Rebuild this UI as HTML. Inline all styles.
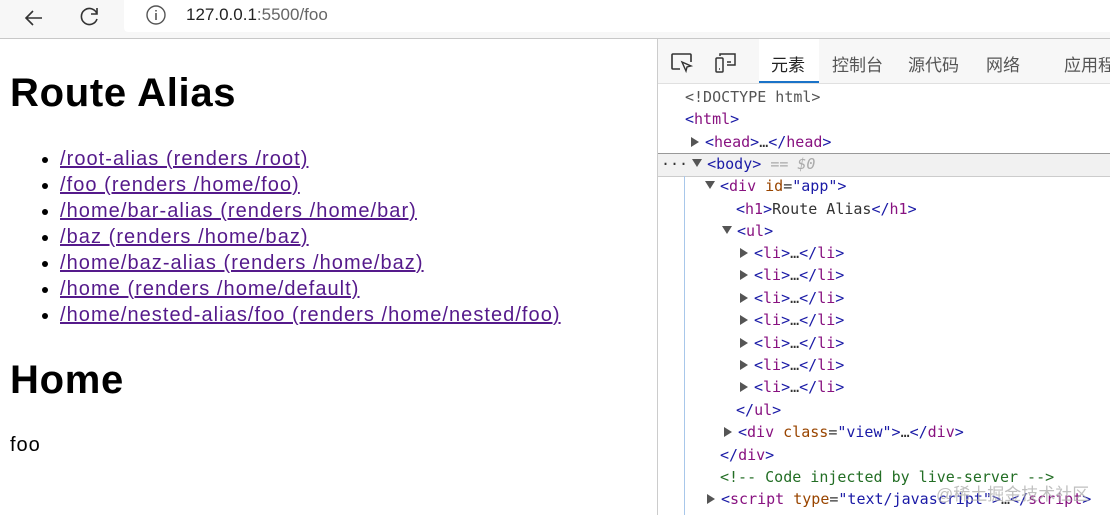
<!DOCTYPE html>
<html><head><style>
body{margin:0;width:1110px;height:515px;overflow:hidden;background:#fff;position:relative;font-family:"Liberation Sans",sans-serif}
.top{position:absolute;left:0;top:0;width:1110px;height:38px;background:#f7f7f7;border-bottom:1px solid #c8c8c8}
.addr{position:absolute;left:124px;top:0;width:986px;height:32px;background:#fff;border-radius:0 0 0 4px}
.url{position:absolute;left:186px;top:5px;font-size:17px;color:#222}
.url span{color:#666}
h1{position:absolute;margin:0;font-size:40px;font-weight:bold;left:10px;letter-spacing:0.7px}
ul{position:absolute;left:0;top:146px;margin:0;padding-left:60px;font-size:20px;line-height:26px;letter-spacing:1.05px}
li{color:#000}
a{color:#551a8b;text-decoration:underline}
.dev{position:absolute;left:657px;top:39px;width:453px;height:476px;border-left:1px solid #ccc;background:#fff}
.tabs{position:absolute;left:0;top:0;width:453px;height:44px;background:#f7f7f7;border-bottom:1px solid #e0e0e0;font-family:"Liberation Sans","Noto Sans CJK SC",sans-serif;font-size:17px;color:#555;overflow:hidden}
.tabs div{position:absolute;top:12px;white-space:nowrap}
.code{position:absolute;left:0;top:46px;width:453px;font-family:"DejaVu Sans Mono",monospace;font-size:15px}
.ln{position:absolute;height:22px;line-height:22px;white-space:pre;color:#333}
.t{color:#881280}.b{color:#1a1aa6}.an{color:#994500}.av{color:#1a1aa6}.c{color:#236e25}.g{color:#555}
.tri{display:inline-block;width:0;height:0;border-left:8px solid #555;border-top:5px solid transparent;border-bottom:5px solid transparent;margin-right:6px;vertical-align:0px}
.trid{display:inline-block;width:0;height:0;border-top:8px solid #555;border-left:5px solid transparent;border-right:5px solid transparent;margin-right:5px;vertical-align:2px}
</style></head><body>
<div class="top">
<svg style="position:absolute;left:22px;top:6px" width="24" height="24" viewBox="0 0 24 24"><path d="M20 12H4M11 5l-7 7 7 7" fill="none" stroke="#333" stroke-width="1.6"/></svg>
<svg style="position:absolute;left:78px;top:4px" width="24" height="24" viewBox="0 0 24 24"><path d="M19 10A8 8 0 1 0 19 15M19 4v6h-6" fill="none" stroke="#333" stroke-width="1.6"/></svg>
<div class="addr"></div>
<svg style="position:absolute;left:145px;top:4px" width="22" height="22" viewBox="0 0 22 22"><circle cx="11" cy="11" r="9" fill="none" stroke="#555" stroke-width="1.4"/><path d="M11 9v7M11 6v1.5" stroke="#555" stroke-width="1.6"/></svg>
<div class="url">127.0.0.1<span>:5500/foo</span></div>
</div>
<h1 style="top:71px">Route Alias</h1>
<ul>
<li><a>/root-alias (renders /root)</a></li>
<li><a>/foo (renders /home/foo)</a></li>
<li><a>/home/bar-alias (renders /home/bar)</a></li>
<li><a>/baz (renders /home/baz)</a></li>
<li><a>/home/baz-alias (renders /home/baz)</a></li>
<li><a>/home (renders /home/default)</a></li>
<li><a>/home/nested-alias/foo (renders /home/nested/foo)</a></li>
</ul>
<h1 style="top:358px">Home</h1>
<div style="position:absolute;left:10px;top:434px;font-size:20px;letter-spacing:1px">foo</div>
<div class="dev">
<div class="tabs">
<svg style="position:absolute;left:12px;top:13px" width="24" height="22" viewBox="0 0 24 22"><path d="M10 17H3a1 1 0 0 1-1-1V3a1 1 0 0 1 1-1h17a1 1 0 0 1 1 1v7" fill="none" stroke="#333" stroke-width="1.6"/><path d="M12 10l9 4-4 1-1 4z" fill="none" stroke="#333" stroke-width="1.4"/></svg>
<svg style="position:absolute;left:56px;top:12px" width="24" height="24" viewBox="0 0 24 24"><rect x="2" y="7" width="7" height="14" rx="1" fill="none" stroke="#333" stroke-width="1.5"/><path d="M6 5V3h15v11h-8M13 11h4M5 18h1" fill="none" stroke="#333" stroke-width="1.5"/></svg>
<div style="left:101px;top:0;width:60px;height:42px;background:#fff;border-bottom:3px solid #1a73c8"></div>
<div style="left:113px;color:#222">元素</div>
<div style="left:174px">控制台</div>
<div style="left:250px">源代码</div>
<div style="left:328px">网络</div>
<div style="left:406px">应用程</div>
</div>
<div style="position:absolute;left:0;top:114px;width:453px;height:22px;background:#f1f1f1;border-top:1px solid #999;border-bottom:1px solid #ccc"></div>
<div style="position:absolute;left:26px;top:137px;width:1px;height:339px;background:#a8c7ea"></div>
<div class="code">
<div class="ln g" style="left:27px;top:1px">&lt;!DOCTYPE html&gt;</div>
<div class="ln" style="left:27px;top:23px"><span class="b">&lt;</span><span class="t">html</span><span class="b">&gt;</span></div>
<div class="ln" style="left:33px;top:46px"><span class="tri"></span><span class="b">&lt;</span><span class="t">head</span><span class="b">&gt;</span>…<span class="b">&lt;/</span><span class="t">head</span><span class="b">&gt;</span></div>
<div class="ln" style="left:3px;top:68px">···<span class="trid" style="margin-left:4px"></span><span class="b">&lt;</span><span class="t" style="color:#1a1aa6">body</span><span class="b">&gt;</span> <span style="color:#aaa;font-style:italic">== $0</span></div>
<div class="ln" style="left:47px;top:90px"><span class="trid"></span><span class="b">&lt;</span><span class="t">div</span> <span class="an">id</span>=<span class="av">"app"</span><span class="b">&gt;</span></div>
<div class="ln" style="left:78px;top:113px"><span class="b">&lt;</span><span class="t">h1</span><span class="b">&gt;</span>Route Alias<span class="b">&lt;/</span><span class="t">h1</span><span class="b">&gt;</span></div>
<div class="ln" style="left:64px;top:135px"><span class="trid"></span><span class="b">&lt;</span><span class="t">ul</span><span class="b">&gt;</span></div>
<div class="ln" style="left:82px;top:157px"><span class="tri"></span><span class="b">&lt;</span><span class="t">li</span><span class="b">&gt;</span>…<span class="b">&lt;/</span><span class="t">li</span><span class="b">&gt;</span></div>
<div class="ln" style="left:82px;top:179px"><span class="tri"></span><span class="b">&lt;</span><span class="t">li</span><span class="b">&gt;</span>…<span class="b">&lt;/</span><span class="t">li</span><span class="b">&gt;</span></div>
<div class="ln" style="left:82px;top:202px"><span class="tri"></span><span class="b">&lt;</span><span class="t">li</span><span class="b">&gt;</span>…<span class="b">&lt;/</span><span class="t">li</span><span class="b">&gt;</span></div>
<div class="ln" style="left:82px;top:224px"><span class="tri"></span><span class="b">&lt;</span><span class="t">li</span><span class="b">&gt;</span>…<span class="b">&lt;/</span><span class="t">li</span><span class="b">&gt;</span></div>
<div class="ln" style="left:82px;top:247px"><span class="tri"></span><span class="b">&lt;</span><span class="t">li</span><span class="b">&gt;</span>…<span class="b">&lt;/</span><span class="t">li</span><span class="b">&gt;</span></div>
<div class="ln" style="left:82px;top:269px"><span class="tri"></span><span class="b">&lt;</span><span class="t">li</span><span class="b">&gt;</span>…<span class="b">&lt;/</span><span class="t">li</span><span class="b">&gt;</span></div>
<div class="ln" style="left:82px;top:291px"><span class="tri"></span><span class="b">&lt;</span><span class="t">li</span><span class="b">&gt;</span>…<span class="b">&lt;/</span><span class="t">li</span><span class="b">&gt;</span></div>
<div class="ln" style="left:78px;top:314px"><span class="b">&lt;/</span><span class="t">ul</span><span class="b">&gt;</span></div>
<div class="ln" style="left:66px;top:336px"><span class="tri"></span><span class="b">&lt;</span><span class="t">div</span> <span class="an">class</span>=<span class="av">"view"</span><span class="b">&gt;</span>…<span class="b">&lt;/</span><span class="t">div</span><span class="b">&gt;</span></div>
<div class="ln" style="left:62px;top:359px"><span class="b">&lt;/</span><span class="t">div</span><span class="b">&gt;</span></div>
<div class="ln c" style="left:62px;top:381px">&lt;!-- Code injected by live-server --&gt;</div>
<div class="ln" style="left:49px;top:403px"><span class="tri"></span><span class="b">&lt;</span><span class="t">script</span> <span class="an">type</span>=<span class="av">"text/javascript"</span><span class="b">&gt;</span>…<span class="b">&lt;/</span><span class="t">script</span><span class="b">&gt;</span></div>
</div>
<div style="position:absolute;left:278px;top:441px;font-family:'Liberation Sans','Noto Sans CJK SC',sans-serif;font-size:17px;color:rgba(170,170,170,0.75)">@稀土掘金技术社区</div>
</div>
</body></html>
